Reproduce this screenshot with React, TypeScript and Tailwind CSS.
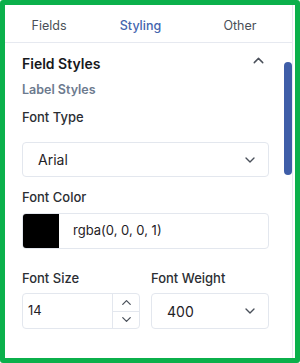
import React from 'react'

const ChevronDown = ({ className }: { className?: string }) => (
    <svg viewBox="0 0 24 24" className={className} fill="none" stroke="currentColor" strokeWidth={2} strokeLinecap="round" strokeLinejoin="round">
        <path d="M6 9l6 6 6-6" />
    </svg>
)

const ChevronUp = ({ className }: { className?: string }) => (
    <svg viewBox="0 0 24 24" className={className} fill="none" stroke="currentColor" strokeWidth={2} strokeLinecap="round" strokeLinejoin="round">
        <path d="M6 15l6-6 6 6" />
    </svg>
)

const App = () => {
    const tabs = ['Fields', 'Styling', 'Other']

    return (
        <div className="w-[300px] h-[363px] bg-white" style={{ fontFamily: 'Inter, "Noto Sans", sans-serif' }}>
            <div className="w-full h-full border-[5px] border-[#0bb04b] rounded-[3px] flex flex-col overflow-hidden">
                {/* tabs */}
                <div className="grid grid-cols-[88px_95px_1fr] h-[38px] border-b border-r border-[#e6e9f0] text-[12.5px] mr-[2px]">
                    {tabs.map((tab) => (
                        <div key={tab} className={`flex items-center justify-center pt-[5px] ${tab === 'Styling' ? 'text-[#4465ae] font-medium' : 'text-[#4a4f57]'}`}>
                            {tab}
                        </div>
                    ))}
                </div>

                {/* scroll area */}
                <div className="flex flex-1 border-r border-[#e6e9f0] mr-[2px]">
                    <div className="flex-1 pl-[17px] pr-[15px]">
                        <div className="mt-[9px] h-[22px] flex items-center justify-between">
                            <p className="text-[14px] font-semibold text-[#16181d]">Field Styles</p>
                            <ChevronUp className="w-[17px] h-[17px] text-[#4a505a] mr-[2px] -mt-[6px]" />
                        </div>

                        <p className="mt-[6px] h-[20px] flex items-center text-[12.5px] font-semibold text-[#6c7a8e]">Label Styles</p>

                        <p className="mt-[8px] h-[20px] flex items-center text-[13px] font-medium text-[#2b2e33]">Font Type</p>
                        <div className="mt-[14px] h-[35px] border border-[#e3e7ee] rounded-[4px] flex items-center justify-between pl-[15px] pr-[10px]">
                            <span className="text-[14px] text-[#1f2226]">Arial</span>
                            <ChevronDown className="w-[16px] h-[16px] text-[#4a505a]" />
                        </div>

                        <p className="mt-[11px] h-[20px] flex items-center text-[13px] font-medium text-[#2b2e33]">Font Color</p>
                        <div className="mt-[5px] h-[36px] border border-[#e3e7ee] rounded-[4px] flex items-stretch overflow-hidden">
                            <div className="w-[36px] bg-black" />
                            <span className="flex items-center pl-[14px] text-[13px] text-[#1f2226]">rgba(0, 0, 0, 1)</span>
                        </div>

                        <div className="grid grid-cols-2 gap-[11px] mt-[20px]">
                            <div>
                                <p className="h-[20px] flex items-center text-[13px] font-medium text-[#2b2e33]">Font Size</p>
                                <div className="mt-[4px] h-[36px] border border-[#e3e7ee] rounded-[4px] flex">
                                    <span className="flex-1 flex items-center pl-[5px] text-[13px] text-[#1f2226]">14</span>
                                    <div className="w-[27px] border-l border-[#e3e7ee] flex flex-col">
                                        <div className="flex-1 flex items-center justify-center border-b border-[#e3e7ee]">
                                            <ChevronUp className="w-[15px] h-[15px] text-[#4a505a]" />
                                        </div>
                                        <div className="flex-1 flex items-center justify-center">
                                            <ChevronDown className="w-[15px] h-[15px] text-[#4a505a]" />
                                        </div>
                                    </div>
                                </div>
                            </div>
                            <div>
                                <p className="h-[20px] flex items-center text-[13px] font-medium text-[#2b2e33]">Font Weight</p>
                                <div className="mt-[4px] h-[36px] border border-[#e3e7ee] rounded-[4px] flex items-center justify-between pl-[15px] pr-[10px]">
                                    <span className="text-[14px] text-[#1f2226]">400</span>
                                    <ChevronDown className="w-[16px] h-[16px] text-[#4a505a]" />
                                </div>
                            </div>
                        </div>
                    </div>

                    {/* scrollbar rail */}
                    <div className="w-[8px]">
                        <div className="mt-[19px] h-[113px] w-[8px] rounded-full bg-[#3f5ea8]" />
                    </div>
                </div>
            </div>
        </div>
    )
}

export default App
